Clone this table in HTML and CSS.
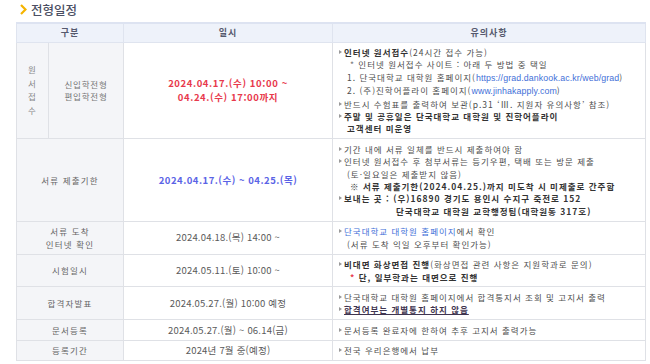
FILE: index.html
```html
<!DOCTYPE html>
<html lang="ko">
<head>
<meta charset="utf-8">
<link rel="stylesheet" href="styles.css">
</head>
<body>
<div class="page">
  <h2 class="title"><svg class="chev" width="7" height="11" viewBox="0 0 7 11"><path d="M1 1 L5.5 5.5 L1 10" fill="none" stroke="#f5b400" stroke-width="2.2"/></svg>전형일정</h2>
  <table class="sched">
    <colgroup>
      <col class="c1"><col class="c2"><col class="c3"><col class="c4">
    </colgroup>
    <thead>
      <tr><th colspan="2">구분</th><th>일시</th><th>유의사항</th></tr>
    </thead>
    <tbody>
      <tr class="r1">
        <td class="lab vert">원<br>서<br>접<br>수</td>
        <td class="lab sub">신입학전형<br>편입학전형</td>
        <td class="date red">2024.04.17.(수) 10:00 ~<br>04.24.(수) 17:00까지</td>
        <td class="note">
          <div class="b"><strong>인터넷 원서접수</strong>(24시간 접수 가능)</div>
          <div class="i2"><span class="star">*</span> 인터넷 원서접수 사이트 : 아래 두 방법 중 택일</div>
          <div class="i1">1. 단국대학교 대학원 홈페이지(<span class="link">https://grad.dankook.ac.kr/web/grad</span>)</div>
          <div class="i1">2. (주)진학어플라이 홈페이지(<span class="link">www.jinhakapply.com</span>)</div>
          <div class="b">반드시 수험표를 출력하여 보관(p.31 ‘Ⅲ. 지원자 유의사항’ 참조)</div>
          <div class="b"><strong>주말 및 공휴일은 단국대학교 대학원 및 진학어플라이</strong></div>
          <div class="i1"><strong>고객센터 미운영</strong></div>
        </td>
      </tr>
      <tr class="r2">
        <td class="lab" colspan="2">서류 제출기한</td>
        <td class="date blue">2024.04.17.(수) ~ 04.25.(목)</td>
        <td class="note">
          <div class="b">기간 내에 서류 일체를 반드시 제출하여야 함</div>
          <div class="b">인터넷 원서접수 후 첨부서류는 등기우편, 택배 또는 방문 제출</div>
          <div class="i1">(토·일요일은 제출받지 않음)</div>
          <div class="i2"><strong>※ 서류 제출기한(2024.04.25.)까지 미도착 시 미제출로 간주함</strong></div>
          <div class="b"><strong>보내는 곳 : (우)16890 경기도 용인시 수지구 죽전로 152</strong></div>
          <div class="i3"><strong>단국대학교 대학원 교학행정팀(대학원동 317호)</strong></div>
        </td>
      </tr>
      <tr>
        <td class="lab" colspan="2">서류 도착<br>인터넷 확인</td>
        <td class="date">2024.04.18.(목) 14:00 ~</td>
        <td class="note">
          <div class="b"><span class="klink">단국대학교 대학원 홈페이지</span>에서 확인</div>
          <div class="i1">(서류 도착 익일 오후부터 확인가능)</div>
        </td>
      </tr>
      <tr>
        <td class="lab" colspan="2">시험일시</td>
        <td class="date">2024.05.11.(토) 10:00 ~</td>
        <td class="note">
          <div class="b"><strong>비대면 화상면접 진행</strong>(화상면접 관련 사항은 지원학과로 문의)</div>
          <div class="i2"><strong><span class="star red">*</span> 단, 일부학과는 대면으로 진행</strong></div>
        </td>
      </tr>
      <tr>
        <td class="lab" colspan="2">합격자발표</td>
        <td class="date">2024.05.27.(월) 10:00 예정</td>
        <td class="note">
          <div class="b">단국대학교 대학원 홈페이지에서 합격통지서 조회 및 고지서 출력</div>
          <div class="b"><strong class="ul">합격여부는 개별통지 하지 않음</strong></div>
        </td>
      </tr>
      <tr>
        <td class="lab" colspan="2">문서등록</td>
        <td class="date">2024.05.27.(월) ~ 06.14(금)</td>
        <td class="note"><div class="b">문서등록 완료자에 한하여 추후 고지서 출력가능</div></td>
      </tr>
      <tr>
        <td class="lab" colspan="2">등록기간</td>
        <td class="date">2024년 7월 중(예정)</td>
        <td class="note"><div class="b">전국 우리은행에서 납부</div></td>
      </tr>
    </tbody>
  </table>
</div>
</body>
</html>
```

FILE: styles.css
```css
* { box-sizing: border-box; }
html, body { margin: 0; padding: 0; background: #fff; }
body {
  font-family: "Noto Sans CJK KR", "Noto Sans", sans-serif;
  color: #555;
  font-size: 8.5px;
}
.page { padding: 2px 5px 0 16px; }
.title {
  margin: 0 0 5px 4px;
  height: 15px;
  display: flex;
  align-items: center;
  gap: 4px;
  font-size: 12.5px;
  font-weight: 500;
  color: #4b4f63;
  line-height: 15px;
}
.chev { display: block; }
.sched {
  width: 629px;
  border-collapse: collapse;
  table-layout: fixed;
  border-top: 2px solid #dde3f1;
}
.c1 { width: 32px; }
.c2 { width: 75px; }
.c3 { width: 209px; }
.c4 { width: 313px; }
.sched th {
  background: #eef2fa;
  height: 19px;
  font-weight: 700;
  font-size: 9px;
  color: #55596d;
  border: 1px solid #dfe4ef;
  border-top: 0;
  padding: 0;
  letter-spacing: 1px;
}
.sched td {
  border: 1px solid #dfe1e6;
  padding: 3.5px 0;
  line-height: 12.4px;
  vertical-align: middle;
}
.lab {
  background: #f4f5f8;
  text-align: center;
  color: #666;
  letter-spacing: 1.2px;
}
.vert { color: #888; line-height: 13.5px !important; }
.sub { color: #777; letter-spacing: 0.8px; }
.date {
  text-align: center;
  color: #5a5a5a;
  font-size: 9.5px;
  letter-spacing: 0.2px;
}
.date.red { color: #e8394c; font-weight: 700; letter-spacing: 0.6px; line-height: 14px !important; }
.date.blue { color: #5a63e6; font-weight: 700; letter-spacing: 0.5px; }
.note {
  padding-left: 6px !important;
  color: #4e4e4e;
  letter-spacing: 1px;
  white-space: nowrap;
}
.note strong { color: #333; font-weight: 700; }
.b { position: relative; padding-left: 5px; }
.b::before {
  content: "";
  position: absolute;
  left: 0;
  top: 4px;
  border-left: 3px solid #999;
  border-top: 2.2px solid transparent;
  border-bottom: 2.2px solid transparent;
}
.i1 { padding-left: 8px; }
.i2 { padding-left: 11px; }
.i3 { padding-left: 57px; }
.star { color: #777; }
.star.red { color: #e8394c; }
.link {
  color: #3f6fd8;
  font-family: "Liberation Sans", sans-serif;
  letter-spacing: 0.1px;
  font-size: 8.8px;
}
.klink { color: #3f6fd8; }
.ul { text-decoration: underline; color: #3f3550 !important; }
```
